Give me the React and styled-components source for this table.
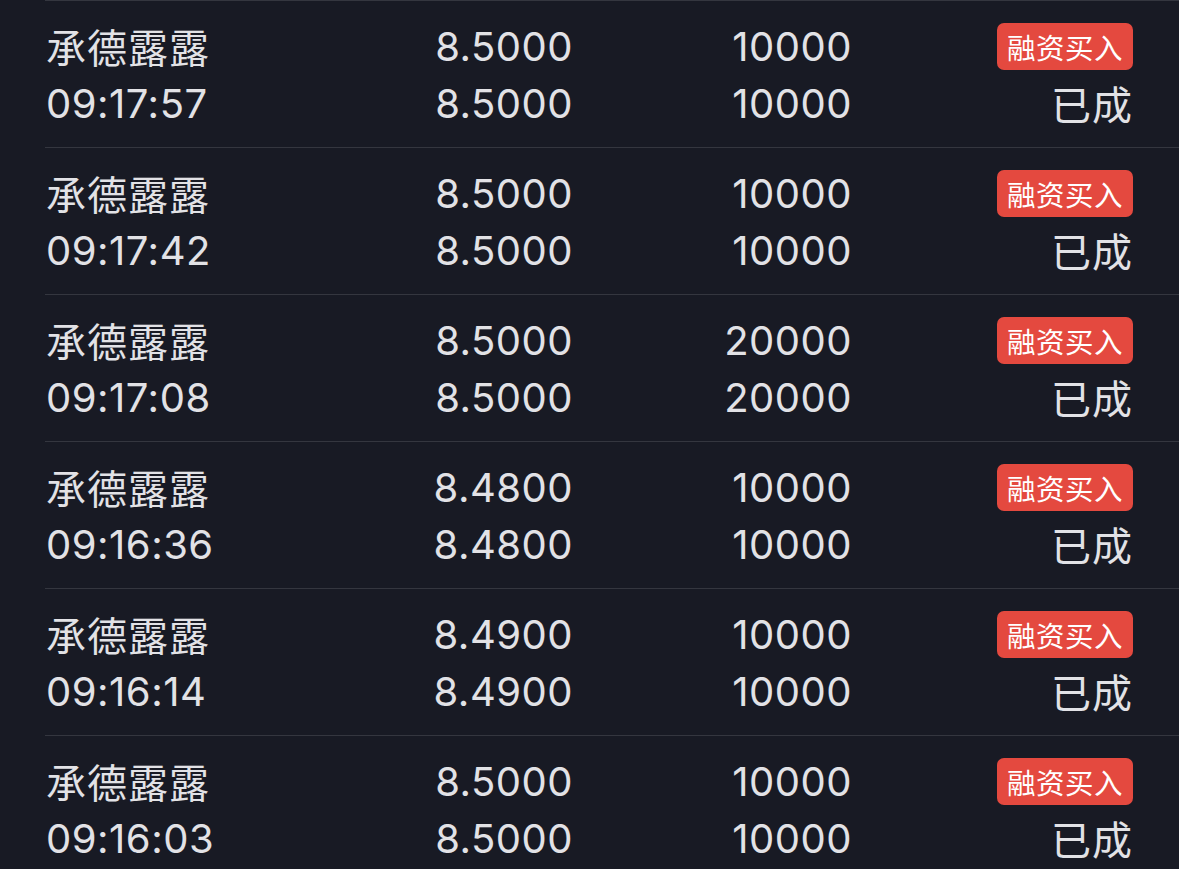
import React from "react";
import styled, { createGlobalStyle } from "styled-components";

const GlobalStyle = createGlobalStyle`
  html, body {
    margin: 0;
    padding: 0;
    background: #181a24;
  }
  body {
    font-family: "Inter", "Noto Sans CJK SC", sans-serif;
    color: #e2e2e6;
    overflow: hidden;
  }
`;

const List = styled.div`
  width: 1179px;
  height: 869px;
  background: #181a24;
  overflow: hidden;
`;

const Row = styled.div`
  margin-left: 45px;
  height: 147px;
  box-sizing: border-box;
  border-top: 1px solid #34363f;
  padding: 17px 46px 0 1px;
  display: grid;
  grid-template-columns: 300px 227px 279px 1fr;
  grid-template-rows: 57px 57px;
  align-items: center;
`;

const Cell = styled.div`
  font-size: 40px;
  line-height: 57px;
  white-space: nowrap;
  text-align: ${(p) => (p.$right ? "right" : "left")};
  font-family: ${(p) =>
    p.$cjk ? '"Noto Sans CJK SC", sans-serif' : '"Inter", "Noto Sans CJK SC", sans-serif'};
  letter-spacing: ${(p) => (p.$cjk ? "1px" : "0.5px")};
`;

const BadgeCell = styled.div`
  display: flex;
  justify-content: flex-end;
  align-items: center;
  height: 57px;
`;

const Badge = styled.span`
  display: inline-flex;
  align-items: center;
  justify-content: center;
  height: 47px;
  padding: 0 10px;
  border-radius: 7px;
  background: #e4493f;
  color: #ffffff;
  font-family: "Noto Sans CJK SC", sans-serif;
  font-size: 28.5px;
  letter-spacing: 0.5px;
`;

const rows = [
  { time: "09:17:57", price: "8.5000", qty: "10000" },
  { time: "09:17:42", price: "8.5000", qty: "10000" },
  { time: "09:17:08", price: "8.5000", qty: "20000" },
  { time: "09:16:36", price: "8.4800", qty: "10000" },
  { time: "09:16:14", price: "8.4900", qty: "10000" },
  { time: "09:16:03", price: "8.5000", qty: "10000" },
];

export default function App() {
  return (
    <List>
      <GlobalStyle />
      {rows.map((r) => (
        <Row key={r.time}>
          <Cell $cjk>承德露露</Cell>
          <Cell $right>{r.price}</Cell>
          <Cell $right>{r.qty}</Cell>
          <BadgeCell>
            <Badge>融资买入</Badge>
          </BadgeCell>
          <Cell>{r.time}</Cell>
          <Cell $right>{r.price}</Cell>
          <Cell $right>{r.qty}</Cell>
          <Cell $right $cjk>已成</Cell>
        </Row>
      ))}
    </List>
  );
}
